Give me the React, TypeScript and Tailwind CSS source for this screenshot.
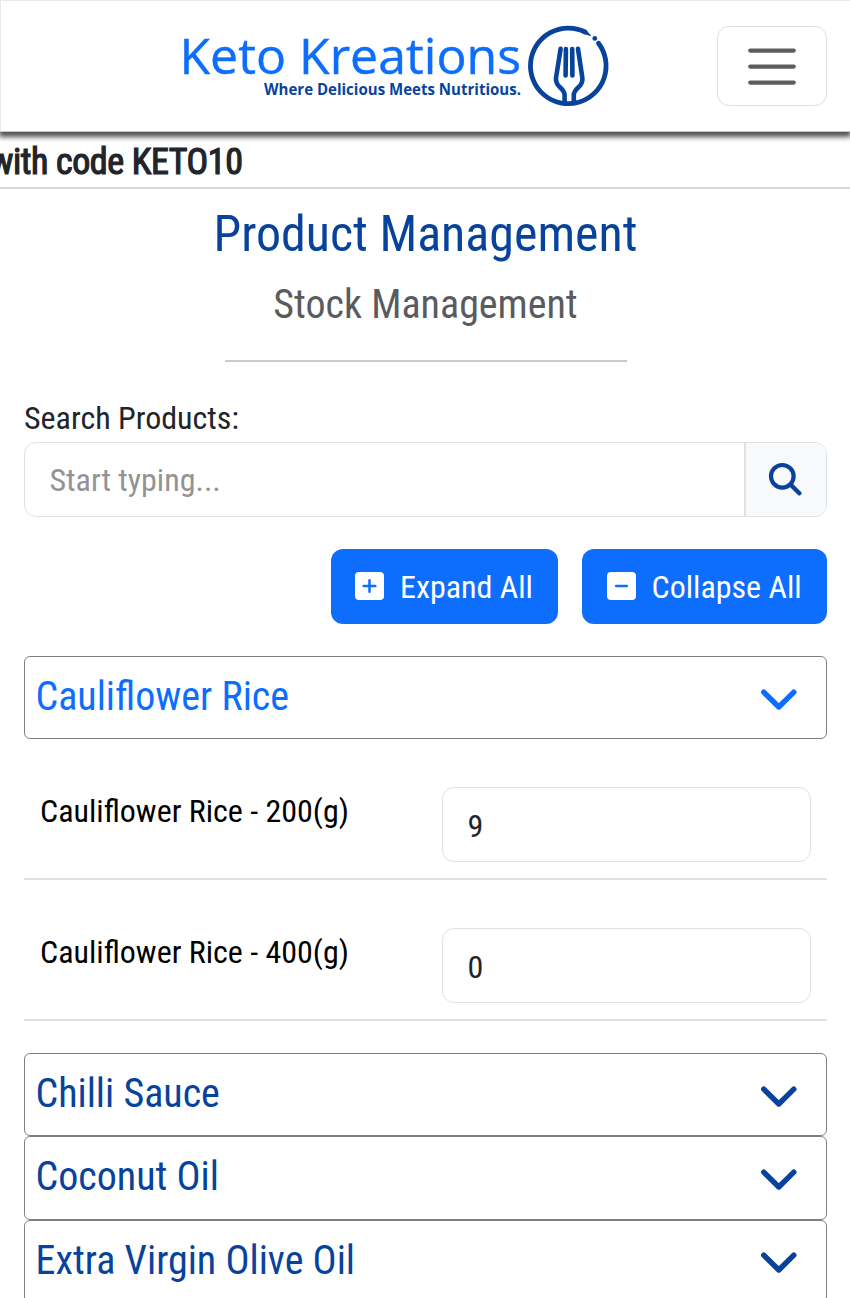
function Logo() {
  return (
    <svg width="430" height="84" viewBox="180 24 430 84" overflow="visible" role="img" aria-label="Keto Kreations">
      <text x="178.5" y="72.6" fontSize="50" textLength="341.5" lengthAdjust="spacingAndGlyphs" fill="#0d6efd" stroke="#0d6efd" strokeWidth="0.4" className="font-['Open_Sans',sans-serif] font-stretch-normal">
        Keto Kreations
      </text>
      <text x="263" y="94.3" fontSize="16.4" fontWeight="700" textLength="257" lengthAdjust="spacingAndGlyphs" fill="#07439c" className="font-['Open_Sans',sans-serif] font-stretch-normal">
        Where Delicious Meets Nutritious.
      </text>
      <g fill="none" stroke="#07439c" strokeLinecap="round" strokeLinejoin="round">
        <path d="M597.5 42.2 A37.8 37.8 0 1 1 584 31" strokeWidth="4.8" />
        <path d="M559.6 47.8 L555 77 Q554.6 82.5 559 86.2 Q563.6 90.5 563.6 94 L563.6 101" strokeWidth="4.6" />
        <path d="M577 47.8 L581.4 77 Q581.8 82.5 577.4 86.2 Q572.8 90.5 572.8 94 L572.8 101" strokeWidth="4.6" />
        <path d="M564.9 48 L564.6 74.5 M571.2 48 L571.4 74.5" strokeWidth="4.6" />
      </g>
      <path d="M582 27.8 Q587 30 590.2 35.2 Q586 34 582 32.5 Z" fill="#07439c" />
      <circle cx="593.8" cy="37.4" r="2.4" fill="#07439c" />
    </svg>
  );
}

function MenuIcon() {
  return (
    <svg width="60" height="60" viewBox="0 0 30 30" fill="none" stroke="#5c5c5e" strokeWidth="2.1" strokeLinecap="round">
      <path d="M4.1 7.3h21.8M4.1 15.3h21.8M4.1 23.3h21.8" />
    </svg>
  );
}

function SearchIcon() {
  return (
    <svg width="34" height="34" viewBox="0 0 34 34" fill="none" stroke="#07439c">
      <circle cx="14.3" cy="14.3" r="11.3" strokeWidth="4.2" />
      <path d="M22.5 22.5 L31.3 31.3" strokeWidth="4.4" strokeLinecap="round" />
    </svg>
  );
}

function SquareIcon({ plus }: { plus?: boolean }) {
  return (
    <svg width="29" height="28" viewBox="0 0 29 28" className="-mt-0.5">
      <rect width="29" height="28" rx="4" fill="#fff" />
      <path d={plus ? "M8.7 14h11.6M14.5 8.2v11.6" : "M9.2 14h10.6"} stroke="#0d6efd" strokeWidth="2.5" strokeLinecap="round" />
    </svg>
  );
}

function Chevron() {
  return (
    <svg width="36" height="22" viewBox="0 0 36 22" fill="none">
      <path d="M2.8 3.2 L17.8 18 L32.8 3.2" stroke="currentColor" strokeWidth="5.4" strokeLinecap="round" strokeLinejoin="round" />
    </svg>
  );
}

function CategoryHeader({ title, open }: { title: string; open?: boolean }) {
  return (
    <button
      className={`flex h-[83.2px] w-full shrink-0 items-center justify-between rounded-[6px] border-[1.6px] border-[#808080] pl-[10.5px] pr-[29px] text-[40px] leading-[48px] ${open ? "text-[#0d6efd]" : "text-[#07439c]"}`}
    >
      <span className="-mt-px">{title}</span>
      <span className="mt-1">
        <Chevron />
      </span>
    </button>
  );
}

function StockRow({ name, quantity }: { name: string; quantity: number }) {
  return (
    <div className="flex h-[141px] items-start justify-between border-b-2 border-[#dee2e6] px-4 pt-[48px] text-black">
      <span className="leading-[48px]">{name}</span>
      <input
        defaultValue={quantity}
        className="h-[75px] w-[369px] rounded-[12px] border-[1.6px] border-[#dee2e6] px-[24.5px] pt-0.5 text-[#212529] outline-none"
      />
    </div>
  );
}

export default function App() {
  return (
    <div className="flex h-[1298px] flex-col overflow-hidden bg-white font-[Roboto,sans-serif] text-[32px] leading-[48px] text-[#212529] font-stretch-condensed">
      <nav className="relative flex h-[132px] shrink-0 items-center justify-between border border-r-0 border-[#e9e9e9] border-b-[#c4c5c5] bg-white pl-[180px] pr-[23px] shadow-[0_4px_5px_1px_#505352]">
        <span className="mt-px">
          <Logo />
        </span>
        <button className="flex h-[80px] w-[110px] items-center justify-center rounded-[12px] border-[1.6px] border-[#dedede]">
          <MenuIcon />
        </button>
      </nav>

      <div className="flex h-[57px] shrink-0 items-center overflow-hidden border-b-2 border-[#d9d9d9] pt-[4px]">
        <strong className="-ml-[10px] whitespace-nowrap text-[36px] font-normal tracking-[-0.4px] [-webkit-text-stroke:1.2px_#212529]">with code KETO10</strong>
      </div>

      <header className="flex flex-col items-center pl-px">
        <h1 className="mt-[15px] text-[50px] leading-[60px] text-[#07439c]">Product Management</h1>
        <h2 className="mt-[17px] text-[40px] leading-[48px] text-[#595c5f]">Stock Management</h2>
        <hr className="mt-[31px] w-[402px] border-t-2 border-[#c8c9ca]" />
      </header>

      <main className="flex flex-col pl-6 pr-[23px] pt-[32px]">
        <label htmlFor="search" className="leading-[48px]">
          Search Products:
        </label>
        <div className="flex h-[75px] overflow-hidden rounded-[12px] border-[1.6px] border-[#dee2e6]">
          <input id="search" placeholder="Start typing..." className="min-w-0 grow px-[24.5px] outline-none placeholder:text-[#939393]" />
          <button className="flex w-[82px] items-center justify-center border-l-2 border-[#dee2e6] bg-[#f8f9fa] pr-0.5 pb-0.5">
            <SearchIcon />
          </button>
        </div>

        <div className="mt-[32px] flex justify-end gap-6 text-white">
          <button className="flex h-[75px] w-[227px] items-center gap-4 rounded-[12px] bg-[#0d6efd] pl-[24px]">
            <SquareIcon plus />
            <span>Expand All</span>
          </button>
          <button className="flex h-[75px] w-[245px] items-center gap-4 rounded-[12px] bg-[#0d6efd] pl-[24.5px]">
            <SquareIcon />
            <span>Collapse All</span>
          </button>
        </div>

        <section className="mt-[32px] flex flex-col">
          <CategoryHeader title="Cauliflower Rice" open />
          <div className="mb-8">
            <StockRow name="Cauliflower Rice - 200(g)" quantity={9} />
            <StockRow name="Cauliflower Rice - 400(g)" quantity={0} />
          </div>
          <CategoryHeader title="Chilli Sauce" />
          <CategoryHeader title="Coconut Oil" />
          <CategoryHeader title="Extra Virgin Olive Oil" />
        </section>
      </main>
    </div>
  );
}
